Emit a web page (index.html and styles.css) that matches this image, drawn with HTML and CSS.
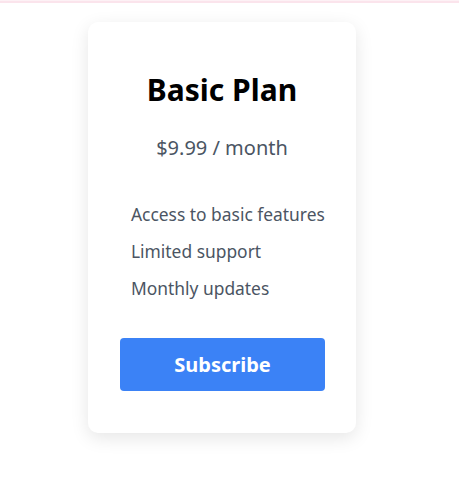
FILE: index.html
```html
<!DOCTYPE html>
<html lang="en">
<head>
<meta charset="utf-8">
<title>Basic Plan</title>
<link rel="stylesheet" href="styles.css">
</head>
<body>
<div class="topline"></div>
<main class="page">
  <section class="card">
    <h2 class="title">Basic Plan</h2>
    <p class="price">$9.99 / month</p>
    <ul class="features">
      <li>Access to basic features</li>
      <li>Limited support</li>
      <li>Monthly updates</li>
    </ul>
    <button class="subscribe">Subscribe</button>
  </section>
</main>
</body>
</html>
```
FILE: styles.css
```css
html, body {
  margin: 0;
  padding: 0;
  background: #ffffff;
}
body {
  font-family: "Noto Sans", "Open Sans", sans-serif;
  width: 459px;
  height: 483px;
  overflow: hidden;
}
.topline {
  height: 1px;
  background: #fdf1f5;
  border-bottom: 2px solid #fbe4ec;
}
.page {
  padding: 19px 0 0 88px;
}
.card {
  width: 268px;
  box-sizing: border-box;
  padding: 32px 32px 42px 32px;
  background: #fff;
  border-radius: 10px;
  box-shadow: 0 5px 18px rgba(0, 0, 0, 0.1);
}
.title {
  margin: 16px 0 0 0;
  text-align: center;
  font-size: 30px;
  line-height: 40px;
  font-weight: 700;
  color: #000;
}
.price {
  margin: 24px 0 0 0;
  text-align: center;
  font-size: 20px;
  line-height: 27px;
  color: #4b5563;
}
.features {
  list-style: none;
  margin: 35px 0 0 0;
  padding: 0 0 0 11px;
}
.features li {
  font-size: 17.4px;
  line-height: 37px;
  color: #4b5563;
  white-space: nowrap;
}
.subscribe {
  display: block;
  width: 205px;
  height: 53px;
  margin: 31px 0 0 0;
  border: none;
  border-radius: 4px;
  background: #3b82f6;
  color: #fff;
  font-family: inherit;
  font-size: 20px;
  font-weight: 700;
}
```
